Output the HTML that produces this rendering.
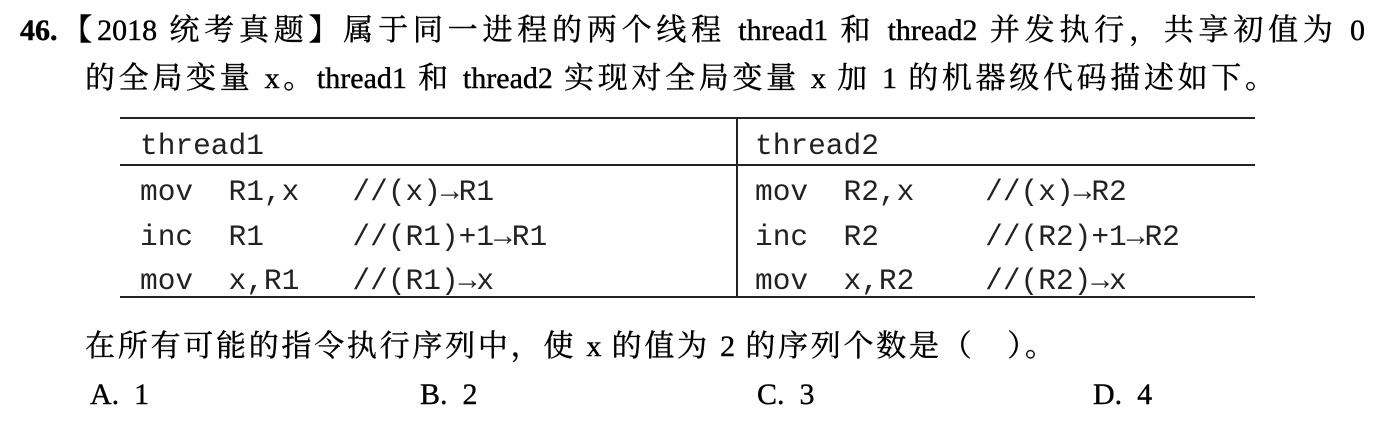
<!DOCTYPE html>
<html><head><meta charset="utf-8"><style>
body{margin:0;width:1390px;height:425px;background:#fff;position:relative;overflow:hidden;color:#000;font-family:"Liberation Serif","Noto Serif CJK SC",serif;}
.l{position:absolute;font-size:30px;line-height:36px;white-space:nowrap;text-align:justify;text-align-last:justify;-webkit-text-stroke:0.4px #000;}
.m{position:absolute;font-family:"Liberation Mono",monospace;font-size:29.5px;line-height:36px;white-space:pre;color:#222;}
.h{position:absolute;background:#222;height:2px;}
.v{position:absolute;background:#222;width:2px;}
</style></head><body>
<div class="l" style="left:20px;top:13px;width:1345px"><b>46.</b>【2018 统考真题】属于同一进程的两个线程 thread1 和 thread2 并发执行，共享初值为 0</div>
<div class="l" style="left:85px;top:61px;width:1190px">的全局变量 x。thread1 和 thread2 实现对全局变量 x 加 1 的机器级代码描述如下。</div>
<div class="h" style="left:120px;top:117px;width:1135px"></div>
<div class="h" style="left:120px;top:164px;width:1135px"></div>
<div class="h" style="left:120px;top:296px;width:1135px"></div>
<div class="v" style="left:736px;top:117px;height:181px"></div>
<div class="m" style="left:140px;top:128px">thread1</div>
<div class="m" style="left:755px;top:128px">thread2</div>
<div class="m" style="left:140px;top:174px">mov  R1,x   //(x)→R1</div>
<div class="m" style="left:140px;top:219px">inc  R1     //(R1)+1→R1</div>
<div class="m" style="left:140px;top:263px">mov  x,R1   //(R1)→x</div>
<div class="m" style="left:755px;top:174px">mov  R2,x    //(x)→R2</div>
<div class="m" style="left:755px;top:219px">inc  R2      //(R2)+1→R2</div>
<div class="m" style="left:755px;top:263px">mov  x,R2    //(R2)→x</div>
<div class="l" style="left:85px;top:329px;width:970px">在所有可能的指令执行序列中，使 x 的值为 2 的序列个数是（　）。</div>
<div class="l" style="left:90px;top:377px;text-align:left;text-align-last:auto">A.&nbsp; 1</div>
<div class="l" style="left:420px;top:377px;text-align:left;text-align-last:auto">B.&nbsp; 2</div>
<div class="l" style="left:757px;top:377px;text-align:left;text-align-last:auto">C.&nbsp; 3</div>
<div class="l" style="left:1093px;top:377px;text-align:left;text-align-last:auto">D.&nbsp; 4</div>
</body></html>
